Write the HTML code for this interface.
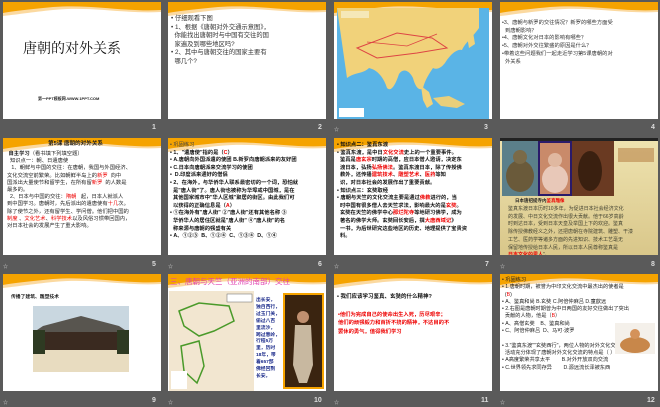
<!DOCTYPE html>
<html><head><meta charset="utf-8"><style>
*{margin:0;padding:0;box-sizing:border-box}
body{width:660px;height:407px;background:#5a5a5a;position:relative;overflow:hidden;font-family:"Liberation Sans","Noto Sans CJK SC",sans-serif}
.s{position:absolute;width:158px;height:117px;background:#fff;overflow:hidden}
.s svg.h{position:absolute;left:0;top:0}
.n{position:absolute;color:#ddd;font-size:7px;font-weight:bold}
.i{position:absolute;color:#ccc;font-size:5px}
.t{position:absolute;font-size:5.6px;line-height:7px;color:#222}
.r{color:#e00}
</style></head><body>
<svg width="0" height="0" style="position:absolute"><defs>
<symbol id="w" viewBox="0 0 158 20"><rect width="158" height="20" fill="#fff"/><path d="M0 0H158V10C120 12 90 4 50 8 30 10 10 13 0 14Z" fill="#fbd9a0"/><path d="M0 0H158V8C120 10 90 2 50 5 30 7 10 9 0 11Z" fill="#f5a300"/></symbol></defs></svg>

<!-- row1 -->
<div class="s" style="left:3px;top:2px"><svg class="h" width="158" height="20"><use href="#w"/></svg>
<div class="t" style="left:20px;top:40px;font-size:14px;line-height:16px;font-family:'Liberation Serif','Noto Serif CJK SC',serif;color:#111">唐朝的对外关系</div>
<div class="t" style="left:35px;top:93px;font-size:4px;font-weight:bold">第一PPT模板网-WWW.1PPT.COM</div></div>
<div class="n" style="left:152px;top:124px">1</div>

<div class="s" style="left:168px;top:2px"><svg class="h" width="158" height="20"><use href="#w"/></svg>
<div class="t" style="left:3px;top:13px;font-size:6.3px;line-height:8.5px;color:#333">• 仔细观看下图<br>• 1、根据《唐朝对外交通示意图》，<br>&nbsp;&nbsp;你能找出唐朝时与中国有交往的国<br>&nbsp;&nbsp;家遍及到哪些地区吗?<br>• 2、其中与唐朝交往的国家主要有<br>&nbsp;&nbsp;哪几个?</div></div>
<div class="n" style="left:318px;top:124px">2</div>

<div class="s" style="left:334px;top:2px;background:#fff"><svg class="h" width="158" height="20"><use href="#w"/></svg>
<svg style="position:absolute;left:3px;top:6px" width="152" height="111"><rect width="152" height="111" fill="#5ab4e6"/><path d="M0 0H142V20C135 30 128 35 125 42 120 40 112 48 108 55 104 60 100 62 96 60 92 66 88 72 86 80 82 84 78 78 76 70 72 62 66 60 62 66 58 78 54 84 50 80 46 68 40 62 32 60 26 66 18 64 10 70 0 74Z" fill="#f1d27a"/><path d="M84 78 92 84 96 96 90 100 86 92Z" fill="#f1d27a"/><path d="M96 90 112 88 128 96 120 100 104 98Z" fill="#e9cf7b"/><path d="M130 28 136 24 138 36 132 40Z" fill="#f1d27a"/><path d="M20 40 60 25 95 30 110 40 80 45 40 50Z" fill="none" stroke="#d44" stroke-width="1"/><path d="M30 34 70 38 100 26" fill="none" stroke="#d44" stroke-width=".8"/><rect x="2" y="100" width="25" height="9" fill="#fff"/><rect x="4" y="3" width="28" height="7" fill="#f5e8b8"/></svg></div>
<div class="i" style="left:334px;top:126px">☆</div><div class="n" style="left:484px;top:124px">3</div>

<div class="s" style="left:500px;top:2px"><svg class="h" width="158" height="20"><use href="#w"/></svg>
<div class="t" style="left:2px;top:18px;font-size:5.3px;line-height:7.7px;color:#333">•3、唐朝与新罗的交往情况？新罗的哪些方面受<br>&nbsp;&nbsp;到唐朝影响？<br>•4、唐朝文化对日本的影响有哪些？<br>•5、唐朝对外交往繁盛的原因是什么？<br>•带着这些问题我们一起走近学习第5课唐朝的对<br>&nbsp;&nbsp;外关系</div></div>
<div class="n" style="left:651px;top:124px">4</div>

<!-- row2 -->
<div class="s" style="left:3px;top:138px"><svg class="h" width="158" height="20"><use href="#w"/></svg>
<div class="t" style="left:45px;top:3px;font-weight:bold">第5课 唐朝的对外关系</div>
<div class="t" style="left:4px;top:13px;font-size:5.3px;line-height:7.2px">&nbsp;<b>自主学习</b>（看书填下列填空题）<br>&nbsp;&nbsp;知识点一：朝、日遣唐使<br>&nbsp;&nbsp;&nbsp;1、朝鲜与中国的交往：在唐朝，我国与外国经济、<br>文化交流空前繁荣。比如朝鲜半岛上的<span class="r">新罗</span>&nbsp;&nbsp;向中<br>国派出大量使节和留学生，在所有留<span class="r">新罗</span>&nbsp;&nbsp;的人数是<br>最多的。<br>&nbsp;&nbsp;2、日本与中国的交往：<span class="r">隋朝</span>&nbsp;&nbsp;&nbsp;起，日本人就派人<br>到中国学习。唐朝时，先后派出的遣唐使有<span class="r">十几</span>次。<br>除了使节之外，还有留学生、学问僧。他们把中国的<br><span class="r">制度</span>&nbsp;、<span class="r">文化艺术</span>、<span class="r">科学技术</span>以及风俗习惯带回国内，<br>对日本社会的发展产生了重大影响。</div></div>
<div class="i" style="left:3px;top:263px">☆</div><div class="n" style="left:152px;top:261px">5</div>

<div class="s" style="left:168px;top:138px"><svg class="h" width="158" height="20"><use href="#w"/></svg>
<div class="t" style="left:2px;top:4px;font-size:5.3px;line-height:7.6px;font-weight:bold;color:#111"><span style="font-weight:normal;color:#444">• 巩固练习</span><br>• 1、"遣唐使"指的是（<span class="r">C</span>）<br>• A.唐朝向外国派遣的使团 B.新罗向唐朝派来的友好团<br>• C.日本向唐朝派来交流学习的使团<br>•&nbsp; D.印度派来通好的僧侣<br>• 2、在海外，与华侨华人联系最密切的一个词，恐怕就<br>&nbsp;&nbsp;是"唐人街"了。唐人街也被称为华埠或中国城，是在<br>&nbsp;&nbsp;其他国家城市中"华人区城"聚居的街区。由此我们可<br>&nbsp;&nbsp;以获得的正确信息是（<span class="r">A</span>）<br>• ①在海外有"唐人街" ②"唐人街"还有其他名称 ③<br>&nbsp;&nbsp;华侨华人的居住区就是"唐人街" ④"唐人街"的名<br>&nbsp;&nbsp;称来源与唐朝的强盛有关<br>• A、①②③&nbsp; B、①②④&nbsp; C、①③④&nbsp; D、①④</div></div>
<div class="i" style="left:168px;top:263px">☆</div><div class="n" style="left:318px;top:261px">6</div>

<div class="s" style="left:334px;top:138px"><svg class="h" width="158" height="20"><use href="#w"/></svg>
<div class="t" style="left:3px;top:4px;font-size:5.3px;line-height:7.6px;font-weight:bold;color:#111">• 知识点二：鉴真东渡<br>• 鉴真东渡，是中日<span class="r">文化交流</span>史上的一个重要事件。<br>&nbsp;&nbsp;鉴真是<span class="r">唐玄宗</span>时期的高僧，应日本僧人邀请，决定东<br>&nbsp;&nbsp;渡日本，弘扬<span class="r">弘扬佛法</span>。鉴真东渡日本，除了传授佛<br>&nbsp;&nbsp;教外，还传播<span class="r">建筑技术</span>、<span class="r">雕塑艺术</span>、<span class="r">医药</span>等知<br>&nbsp;&nbsp;识，对日本社会的发展作出了重要贡献。<br>• 知识点三：玄奘取经<br>• 唐朝与天竺的文化交流主要是通过<span class="r">佛教</span>进行的，当<br>&nbsp;&nbsp;时中国有很多僧人去天竺求法，影响最大的是<span class="r">玄奘</span>。<br>&nbsp;&nbsp;玄奘在天竺的佛学中心<span class="r">那烂陀寺</span>等地研习佛学，成为<br>&nbsp;&nbsp;著名的佛学大师。玄奘回长安后，撰<span class="r">大唐西域记</span>》<br>&nbsp;&nbsp;一书，为后世研究这些地区的历史、地理提供了宝贵资<br>&nbsp;&nbsp;料。</div></div>
<div class="i" style="left:334px;top:263px">☆</div><div class="n" style="left:485px;top:261px">7</div>

<div class="s" style="left:500px;top:138px;background:linear-gradient(#efe3b0,#d9c78a)">
<div style="position:absolute;left:0;top:0;width:158px;height:3px;background:#222"></div>
<svg style="position:absolute;left:2px;top:3px" width="112" height="55"><rect width="112" height="55" fill="#e0a955"/><rect x="0" y="0" width="36" height="55" fill="#5b7f8a"/><ellipse cx="18" cy="35" rx="14" ry="16" fill="#6a5a3a"/><circle cx="18" cy="16" r="7" fill="#7a6a48"/><rect x="36" y="0" width="34" height="55" fill="#2a1a6a"/><rect x="38" y="2" width="30" height="51" fill="#c98a6a"/><ellipse cx="53" cy="38" rx="13" ry="14" fill="#e8c8b8"/><circle cx="53" cy="19" r="7" fill="#e0b8a0"/><rect x="70" y="0" width="42" height="55" fill="#6a3a22"/><ellipse cx="88" cy="30" rx="12" ry="20" fill="#3a2010"/></svg>
<div style="position:absolute;left:118px;top:10px;width:36px;height:14px;background:#b9834a;opacity:.6"></div>
<div class="t" style="left:15px;top:59px;font-size:4.5px;font-weight:bold;color:#222">日本唐招提寺内<span class="r">鉴真雕像</span></div>
<div class="t" style="left:8px;top:68px;font-size:5px;line-height:7.7px;color:#443">鉴真东渡日本历时10多年，为促进日本社会经济文化<br>的发展、中日文化交流作出很大贡献。他于66岁高龄<br>时到达日本，受到日本天皇及举国上下的欢迎。鉴真<br>除传授佛教经义之外，还把唐朝在寺院建筑、雕塑、干漆<br>工艺、医药学等诸多方面的先进知识、技术工艺毫无<br>保留地传授给日本人民，所以日本人民尊称鉴真是<br><b class="r">日本文化的恩人</b>"。</div></div>
<div class="i" style="left:500px;top:263px">☆</div><div class="n" style="left:651px;top:261px">8</div>

<!-- row3 -->
<div class="s" style="left:3px;top:274px"><svg class="h" width="158" height="20"><use href="#w"/></svg>
<div class="t" style="left:8px;top:20px;font-size:4.8px;font-weight:bold">传播了建筑、雕塑技术</div>
<svg style="position:absolute;left:30px;top:32px" width="96" height="66"><rect width="96" height="66" fill="#c9d7e0"/><rect y="44" width="96" height="22" fill="#e8dcc0"/><path d="M10 20 48 10 86 20 95 26 1 26Z" fill="#58554f"/><rect x="10" y="26" width="76" height="18" fill="#3a2a20"/><rect y="24" width="12" height="24" fill="#2e3a22"/><rect x="84" y="24" width="12" height="24" fill="#2e3a22"/></svg></div>
<div class="i" style="left:3px;top:399px">☆</div><div class="n" style="left:152px;top:397px">9</div>

<div class="s" style="left:168px;top:274px"><svg class="h" width="158" height="20"><use href="#w"/></svg>
<div class="t" style="left:2px;top:3px;font-size:7.5px;line-height:9px;color:#e040b0">三、唐朝与天竺（亚洲的南部）交往</div>
<svg style="position:absolute;left:1px;top:17px" width="85" height="100"><rect width="85" height="100" fill="#f2e6d0"/><path d="M10 20 30 12 60 15 65 30 45 40 30 45 15 35Z" fill="none" stroke="#4a9a2a" stroke-width="1.5"/><path d="M12 55 30 50 35 75 28 92 15 80Z" fill="none" stroke="#4a9a2a" stroke-width="1.5"/><rect x="58" y="3" width="25" height="8" fill="#fff" stroke="#666" stroke-width=".5"/><rect x="2" y="80" width="16" height="18" fill="#fff"/></svg>
<div class="t" style="left:88px;top:24px;font-size:4.8px;line-height:6.9px;font-weight:bold;color:#1a2a8a">出长安，<br>独自西行，<br>过玉门关，<br>偷过八百<br>里流沙，<br>跨过葱岭，<br>行程5万<br>里，历时<br>18年，带<br>着657部<br>佛经回到<br>长安。</div>
<div style="position:absolute;left:115px;top:19px;width:41px;height:96px;background:#f5a300"></div>
<svg style="position:absolute;left:117px;top:21px" width="37" height="92"><rect width="37" height="92" fill="#3a2410"/><circle cx="18" cy="22" r="6" fill="#c09070"/><path d="M10 30 26 30 28 70 22 88 14 88 8 70Z" fill="#c8b8a0"/></svg></div>
<div class="i" style="left:168px;top:399px">☆</div><div class="n" style="left:314px;top:397px">10</div>

<div class="s" style="left:334px;top:274px"><svg class="h" width="158" height="20"><use href="#w"/></svg>
<div class="t" style="left:3px;top:20px;font-size:5.5px;font-weight:bold;color:#111">• 我们应该学习鉴真、玄奘的什么精神?</div>
<div class="t" style="left:4px;top:37px;font-size:5.3px;line-height:8.4px;font-weight:bold;color:#e00">•他们为完成自己的使命出生入死，历尽艰辛；<br>他们的顽强毅力和百折不挠的精神，不达目的不<br>罢休的勇气，值得我们学习</div></div>
<div class="i" style="left:334px;top:399px">☆</div><div class="n" style="left:481px;top:397px">11</div>

<div class="s" style="left:500px;top:274px"><svg class="h" width="158" height="20"><use href="#w"/></svg>
<div class="t" style="left:2px;top:3px;font-size:5.2px;line-height:7.3px;color:#222">• 巩固练习<br>• 1.唐朝时期，被誉为中印文化交流中最杰出的使者是<br>&nbsp;&nbsp;(<span class="r">B</span>)<br>• A、鉴真和尚 B.玄奘 C.阿倍仲麻吕 D.童歆远<br>• 2.右图是唐朝时期曾为中日两国的友好交往做出了突出<br>&nbsp;&nbsp;贡献的人物，他是（<span class="r">B</span>）<br>• A、高僧玄奘&nbsp;&nbsp;&nbsp; B、鉴真和尚<br>• C、阿倍仲麻吕&nbsp; D、马可·波罗<br><br>• 3."鉴真东渡""玄奘西行"，两位人物的对外文化交流<br>&nbsp;&nbsp;活动充分体现了唐朝对外文化交流的特点是（ ）<br>• A高度繁荣共享太平&nbsp;&nbsp;&nbsp;&nbsp;&nbsp;&nbsp;&nbsp; B.对外开放双向交流<br>• C.世界领先求同存异&nbsp;&nbsp;&nbsp;&nbsp;&nbsp;&nbsp;&nbsp; D.源远流长泽被东西</div>
<svg style="position:absolute;left:115px;top:49px" width="40" height="31"><rect width="40" height="31" fill="#f4f0ea"/><ellipse cx="20" cy="22" rx="15" ry="8" fill="#c8874a"/><circle cx="20" cy="11" r="5" fill="#d4925a"/></svg></div>
<div class="i" style="left:500px;top:399px">☆</div><div class="n" style="left:647px;top:397px">12</div>
</body></html>
